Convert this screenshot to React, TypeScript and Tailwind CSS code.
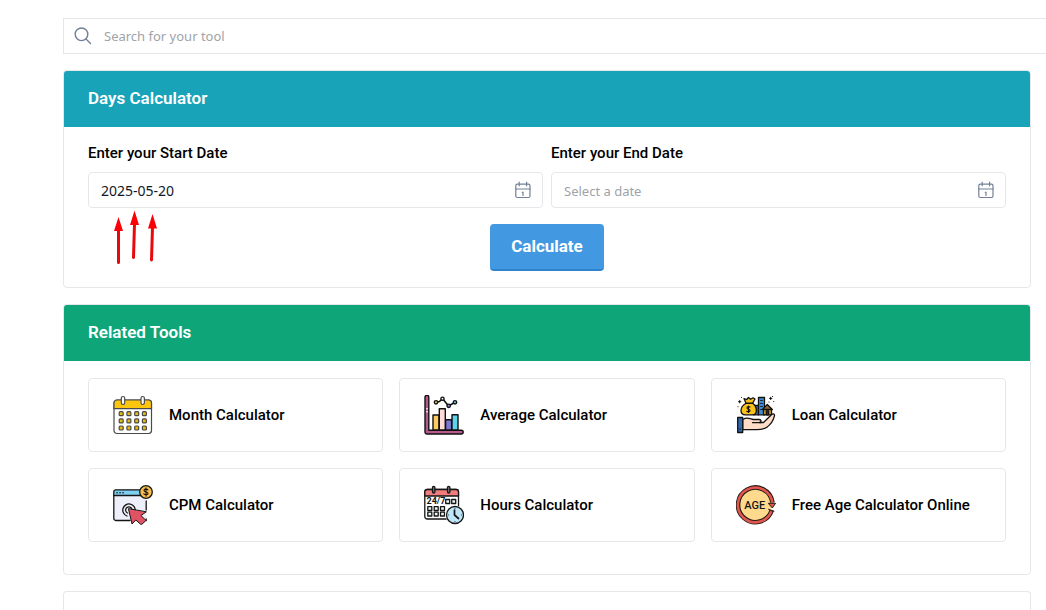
import type { ReactNode } from "react";

const MonthIcon = () => (
  <svg viewBox="0 0 40 40" className="size-10 shrink-0" fill="none" stroke="#4a4a4a" strokeWidth="1.2" aria-hidden="true">
    <rect x="1" y="5" width="37.5" height="33.5" rx="3" fill="#fff" />
    <path d="M1 13.7V8a3 3 0 0 1 3-3H35.5a3 3 0 0 1 3 3v5.7z" fill="#fcc60e" />
    <rect x="8.3" y="1.5" width="3.4" height="8" rx="1.7" fill="#fff" />
    <rect x="28" y="1.5" width="3.4" height="8" rx="1.7" fill="#fff" />
    {[18.7, 25.9, 33].map((y) =>
      [8.2, 15.9, 23.7, 31.4].map((x) => (
        <rect key={`${x}-${y}`} x={x - 2} y={y - 2} width="4" height="4" rx="1" fill="#e8b90f" />
      ))
    )}
  </svg>
);

const AverageIcon = () => (
  <svg viewBox="0 0 40 40" className="size-10 shrink-0" fill="none" stroke="#111" strokeWidth="1.4" strokeLinejoin="round" aria-hidden="true">
    <path d="M9 35.3V20h6v15.3z" fill="#fdcb60" />
    <path d="M15.3 35.3V13.7h6v21.6z" fill="#ffdcd9" />
    <path d="M21.6 35.3V24.7h6v10.6z" fill="#7b78d2" />
    <path d="M28 35.3V19.700h6v15.600z" fill="#5fd3ea" />
    <path d="M1 2.200A1.900 1.900 0 0 1 4.800 2.200v33h32.500a1.900 1.900 0 0 1 0 3.800H3a2 2 0 0 1-2-2z" fill="#b65a8c" />
    <path d="M3 13v1.500M3 16v1.500" stroke="#fff" />
    <path d="M12 7.300L15.500 6.500l3-3 6 7.500 6.500-3.700" strokeWidth="1.600" />
    <circle cx="12" cy="7.300" r="1.700" fill="#fdcb60" />
    <circle cx="18.500" cy="3.700" r="1.600" fill="#fff" />
    <circle cx="24.700" cy="10.800" r="1.700" fill="#8f8be0" />
    <circle cx="31" cy="7.300" r="1.700" fill="#5fd3ea" />
  </svg>
);

const LoanIcon = () => (
  <svg viewBox="0 0 40 40" className="size-10 shrink-0" fill="none" stroke="#111" strokeWidth="1.3" strokeLinejoin="round" strokeLinecap="round" aria-hidden="true">
    <path d="M17.5 10.3h5v9.5h-5z" fill="#3d73bd" />
    <path d="M22.5 2.5h6v17.3h-6z" fill="#3f8bd8" />
    <path d="M24.5 5.5h2M24.5 8.5h2M24.5 11.5h2M24.5 14.5h2M19.5 13h1M19.5 16h1" strokeWidth="0.8" />
    <path d="M27.5 14.2v5.6h8v-5.6" fill="#d7a12a" />
    <path d="M26.3 14.5l5-5 5 5z" fill="#8c6b2c" />
    <path d="M30.3 19.8v-4h2.3v4z" fill="#333" />
    <path d="M10 8.2L8 3.5l2.7 1L12.5 2.5l2 1.8 2.5-1.5L19 4l-2.4 4.2c3 2.3 4 5 3.7 8-.2 2.6-1.5 3.6-4 3.600H9.500c-3 0-4.500-1.500-4.500-4.300 0-3 2-5.500 5-7.300z" fill="#f8c11c" />
    <path d="M9.800 8.300h7" strokeWidth="1.400" />
    <path d="M14 12c-1.500-.7-3-.3-3 .9 0 1.700 3 .9 3 2.600 0 1.300-1.800 1.600-3.200.8M12.500 11v6.500" strokeWidth="1.100" />
    <path d="M6.700 24.500c3-1.800 5-1.800 7.500-.8l3 .8h6c2.200 0 2.500 2.700.3 3h4l8.200-8c1.500-1.300 3.300-.2 2.700 1.700-1.200 4.500-3.800 8.500-7.500 11-3 2-6 2.500-10 2.500H6.700z" fill="#ffdcc8" />
    <path d="M16.500 27.700h8" />
    <path d="M1.700 22.500h5v15h-5z" fill="#2f69b2" />
    <path d="M4 34v.2" />
    <path d="M3.700 5.500v2.400M2.500 6.700h2.400M34.700 2.200v2.400M33.500 3.400h2.400M37.700 6.500v.1M5.500 2.300v.1M2 11.700v.1M33 7v.1M36.500 1.500v.1" strokeWidth="1" />
  </svg>
);

const CpmIcon = () => (
  <svg viewBox="0 0 40 40" className="size-10 shrink-0" fill="none" stroke="#151515" strokeWidth="1.3" strokeLinejoin="round" strokeLinecap="round" aria-hidden="true">
    <path d="M.8 5h32.400v28.500a2 2 0 0 1-2 2H2.800a2 2 0 0 1-2-2z" fill="#edf0fa" stroke="none" />
    <path d="M.8 10.500V6.800a2 2 0 0 1 2-2h28v5.700z" fill="#7ecdf2" />
    <path d="M.8 10.500v23a2 2 0 0 0 2 2H17M33.200 16v9M33.200 34v1.500" />
    <path d="M4 7.700h.1M7 7.700h.1M10 7.700h.1" strokeWidth="1.600" />
    <circle cx="33" cy="7" r="6.300" fill="#f9bd4b" />
    <path d="M35 4.900c-1.300-1.200-4-1-4 .6 0 2 4 .9 4 2.900 0 1.700-2.700 1.800-4.200.5M33 2.900v8.200" strokeWidth="1.100" />
    <path d="M14 31a6.200 6.200 0 1 1 8.100-4.900" />
    <path d="M14.500 28a3.200 3.200 0 1 1 4.500-3.500" />
    <path d="M15.500 24l3.500 15 3.800-4 5.500 4.800 4.700-4.300-5-5 5-3.500z" fill="#df5364" strokeWidth="1" />
  </svg>
);

const HoursIcon = () => (
  <svg viewBox="0 0 40 40" className="size-10 shrink-0" fill="none" stroke="#151515" strokeWidth="1.3" strokeLinejoin="round" strokeLinecap="round" aria-hidden="true">
    <rect x=".8" y="4.500" width="33.700" height="29.500" rx="2.500" fill="#fff" />
    <path d="M.8 11V7a2.500 2.500 0 0 1 2.500-2.500H32A2.500 2.500 0 0 1 34.500 7v4z" fill="#ef7d7d" />
    <rect x="8.500" y="1.400" width="2.400" height="6.600" rx="1.200" fill="#777" />
    <rect x="23.500" y="1.400" width="2.400" height="6.600" rx="1.200" fill="#777" />
    <text x="2.500" y="19" fontSize="9" fontWeight="700" fill="#151515" stroke="none" className="font-['Roboto',sans-serif]">24/7</text>
    <g fill="#e7f4f8">
      <rect x="21.700" y="14.500" width="4" height="4" />
      <rect x="27.700" y="14.500" width="4" height="4" />
      {[21.7, 27.2].map((y) =>
        [3.8, 10.2, 16.5].map((x) => <rect key={`${x}-${y}`} x={x} y={y} width="4" height="3.800" />)
      )}
    </g>
    <circle cx="31" cy="30" r="9.600" fill="#fff" stroke="none" />
    <circle cx="31" cy="30" r="8.500" fill="#bde6f8" />
    <path d="M30.500 25v5l4 3.500" strokeWidth="1.700" />
    <path d="M31 23.300v.2M31 36.500v.2M24.500 30h.2M37.300 30h.2" strokeWidth=".8" />
  </svg>
);

const AgeIcon = () => (
  <svg viewBox="0 0 40 40" className="size-10 shrink-0" fill="none" aria-hidden="true">
    <circle cx="19.300" cy="19.700" r="16" fill="#ffda8c" />
    <path d="M35.700 25.500A17.300 17.300 0 1 1 36.500 17.500" stroke="#241a18" strokeWidth="4.600" />
    <path d="M35.400 26.200A17.300 17.300 0 1 1 36.500 18.500" stroke="#e2574c" strokeWidth="2.600" />
    <path d="M32.300 18.300l4 4.700 3.300-4.700z" fill="#e2574c" stroke="#241a18" strokeWidth="1" strokeLinejoin="round" />
    <path d="M32.600 24.300l5.400 1.800" stroke="#241a18" strokeWidth="1" strokeLinecap="round" />
    <text x="18.800" y="24" textAnchor="middle" fontSize="11" fontWeight="500" fill="#151515" className="font-['Roboto',sans-serif]">AGE</text>
  </svg>
);

const CalendarIcon = () => (
  <svg viewBox="0 0 18 18" className="pointer-events-none absolute top-[9px] right-[11px] size-[18px]" fill="none" stroke="#718096" strokeWidth="1.2" strokeLinecap="round" aria-hidden="true">
    <rect x="1.800" y="3.200" width="14.200" height="13.300" rx="1.500" />
    <path d="M1.800 8h14.200M5.200 1.200v3.600M12.600 1.200v3.600M8.300 11.300H9v3.200" />
  </svg>
);

const tools = [
  { name: "Month Calculator", icon: <MonthIcon /> },
  { name: "Average Calculator", icon: <AverageIcon /> },
  { name: "Loan Calculator", icon: <LoanIcon /> },
  { name: "CPM Calculator", icon: <CpmIcon /> },
  { name: "Hours Calculator", icon: <HoursIcon /> },
  { name: "Free Age Calculator Online", icon: <AgeIcon /> },
];

function Card({ title, color, children }: { title: string; color: string; children: ReactNode }) {
  return (
    <section className="mt-4 overflow-hidden rounded border border-gray-200">
      <h2 className={`flex h-14 items-center px-6 text-[17px] font-semibold text-white ${color}`}>{title}</h2>
      {children}
    </section>
  );
}

function DateField({ id, label, value, children }: { id: string; label: string; value?: string; children?: ReactNode }) {
  return (
    <div className="relative flex-1">
      <label htmlFor={id} className="mb-2 block text-[15px] leading-[21px] font-medium text-black">
        {label}
      </label>
      <div className="relative">
        <input
          id={id}
          type="text"
          defaultValue={value}
          placeholder="Select a date"
          className="block h-9 w-full rounded border border-gray-200 bg-white px-3 font-['Noto_Sans',sans-serif] text-sm text-gray-900 outline-none placeholder:text-[13px] placeholder:text-[#a0a3a8]"
        />
        <CalendarIcon />
      </div>
      {children}
    </div>
  );
}

export default function App() {
  return (
    <div className="flex min-h-screen flex-col overflow-x-hidden bg-white pt-[18px] pr-[15px] pl-[63px] font-['Roboto',sans-serif]">
      <div className="relative -mr-8 h-9 border border-gray-200">
        <svg viewBox="0 0 18 18" className="absolute top-2 left-[10px] size-[18px]" fill="none" stroke="#718096" strokeWidth="1.400" strokeLinecap="round" aria-hidden="true">
          <circle cx="7.500" cy="7.300" r="6.300" />
          <path d="M12 12l4.500 4.500" />
        </svg>
        <input
          type="text"
          aria-label="Search for your tool"
          placeholder="Search for your tool"
          className="block h-full w-full pl-10 font-['Noto_Sans',sans-serif] text-[13px] text-gray-900 outline-none placeholder:text-[#a0a3a8]"
        />
      </div>

      <Card title="Days Calculator" color="bg-[#19a3b9]">
        <form className="px-6 py-4" onSubmit={(e) => e.preventDefault()}>
          <div className="flex gap-2">
            <DateField id="start" label="Enter your Start Date" value="2025-05-20">
              <svg viewBox="0 0 48 56" className="pointer-events-none absolute top-[66px] left-6 h-14 w-12" aria-hidden="true">
                <path d="M6.500 20v33.500M22.500 15L21.500 48.500M40.500 18L39.500 51" stroke="#e8090d" strokeWidth="3" strokeLinecap="round" />
                <path d="M6.500 8l4.500 14H2zM22.500 1.500l4.500 14.500h-9zM40.500 5l4.500 14.500h-9z" fill="#fb0007" />
              </svg>
            </DateField>
            <DateField id="end" label="Enter your End Date" />
          </div>
          <button type="submit" className="mx-auto mt-4 block h-[47px] w-[114px] rounded border-b-2 border-[#3182ce] bg-[#4299e1] text-[17px] font-bold text-white">
            Calculate
          </button>
        </form>
      </Card>

      <Card title="Related Tools" color="bg-[#0ea678]">
        <div className="grid grid-cols-3 gap-4 px-6 pt-[17px] pb-8">
          {tools.map((tool) => (
            <a key={tool.name} href="#" className="flex items-center gap-4 rounded border border-gray-200 px-6 py-4 text-[15px] font-medium text-black">
              {tool.icon}
              {tool.name}
            </a>
          ))}
        </div>
      </Card>

      <section className="mt-4 flex-1 rounded-t border border-b-0 border-gray-200" />
    </div>
  );
}
